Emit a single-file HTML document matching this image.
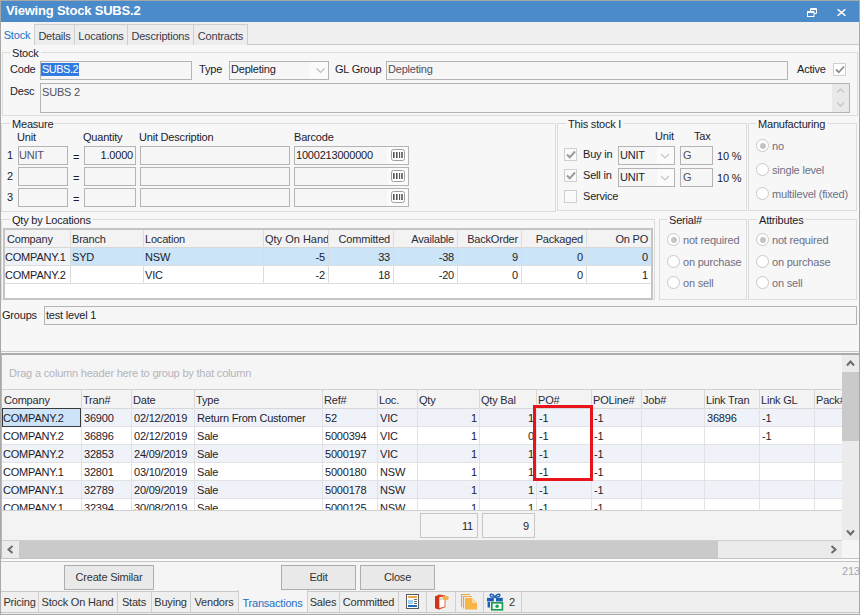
<!DOCTYPE html>
<html><head><meta charset="utf-8"><style>
*{box-sizing:border-box;margin:0;padding:0}
html,body{width:860px;height:615px;overflow:hidden;background:#f0f0f0}
body{position:relative;font-family:"Liberation Sans",sans-serif;font-size:11px;color:#1b1b2b;letter-spacing:-0.2px}
.a{position:absolute}
.t{position:absolute;white-space:nowrap;line-height:13px}
.inp{position:absolute;background:#f6f6f6;border:1px solid #b4b4b4}
.grp{position:absolute;border:1px solid #dcdcdc}
.gl{position:absolute;background:#f7f7f7;padding:0 2px;line-height:13px;white-space:nowrap}
.tab{position:absolute;border:1px solid #cfcfcf;border-bottom:none;background:#ededed;text-align:center;line-height:22px;color:#3a3a4a;white-space:nowrap}
.rad{position:absolute;width:13px;height:13px;border:1px solid #c8c8c8;border-radius:50%;background:#fff}
.chk{position:absolute;width:13px;height:13px;border:1px solid #d0d0d0;background:#fafafa}
.dis{color:#7a7a8c}
.gc{position:absolute;white-space:nowrap;overflow:hidden;line-height:17px;padding:0 2px}
.btn{position:absolute;border:1px solid #adadad;background:#e9e9e9;text-align:center;line-height:22px;color:#333}
</style></head><body>
<div class="a" style="left:0px;top:0px;width:860px;height:615px;background:#f0f0f0;border:1px solid #a8a8a8"></div>
<div class="a" style="left:1px;top:1px;width:858px;height:21px;background:#4b8bca"></div>
<div class="t" style="left:6px;top:3px;font-weight:bold;font-size:13px;color:#fff;line-height:15px;letter-spacing:-0.2px">Viewing Stock SUBS.2</div>
<svg class="a" style="left:807px;top:8px" width="10" height="9" viewBox="0 0 10 9"><path d="M3.5 3V0.5H9.5V5.5H7" fill="none" stroke="#fff"/><path d="M3 1.5H10" stroke="#fff"/><rect x="0.5" y="3.5" width="6.5" height="5" fill="none" stroke="#fff"/><path d="M0 4.5H7" stroke="#fff"/></svg>
<svg class="a" style="left:837px;top:9px" width="9" height="7" viewBox="0 0 9 7"><path d="M0.6 0.2L8.4 6.8M8.4 0.2L0.6 6.8" stroke="#fff" stroke-width="1.5"/></svg>
<div class="a" style="left:1px;top:22px;width:858px;height:22px;background:#f0f0f0"></div>
<div class="a" style="left:1px;top:44px;width:858px;height:1px;background:#c8c8c8"></div>
<div class="a" style="left:1px;top:45px;width:858px;height:306px;background:#f7f7f7"></div>
<div class="tab" style="left:34px;top:24px;width:41px;height:21px">Details</div>
<div class="tab" style="left:74px;top:24px;width:54px;height:21px">Locations</div>
<div class="tab" style="left:127px;top:24px;width:67px;height:21px">Descriptions</div>
<div class="tab" style="left:193px;top:24px;width:55px;height:21px">Contracts</div>
<div class="tab" style="left:1px;top:22px;width:33px;height:23px;padding-right:1px;background:#f7f7f7;color:#1f6fc1;line-height:24px;border-color:#f7f7f7">Stock</div>
<div class="grp" style="left:2px;top:52px;width:856px;height:64px;"></div>
<div class="gl" style="left:10px;top:47px;">Stock</div>
<div class="t" style="left:10px;top:63px;">Code</div>
<div class="inp" style="left:40px;top:61px;width:152px;height:19px;"></div>
<div class="t" style="left:41px;top:63px;background:#2f7be0;color:#fff;line-height:13px;padding:0 1px;letter-spacing:-0.5px">SUBS.2</div>
<div class="t" style="left:199px;top:63px;">Type</div>
<div class="inp" style="left:229px;top:61px;width:100px;height:19px;"></div>
<div class="a" style="left:310px;top:62px;width:18px;height:17px;background:#fbfbfb"></div>
<div class="t" style="left:231px;top:63px;">Depleting</div>
<svg class="a" style="left:316px;top:68px" width="9" height="6"><path d="M0.5 0.5L4.5 4.5L8.5 0.5" fill="none" stroke="#c0c0c0" stroke-width="1.2"/></svg>
<div class="t" style="left:335px;top:63px;">GL Group</div>
<div class="inp" style="left:386px;top:61px;width:402px;height:19px;"></div>
<div class="t" style="left:388px;top:63px;color:#505060">Depleting</div>
<div class="t" style="left:797px;top:63px;">Active</div>
<div class="chk" style="left:833px;top:63px;background:#fff"></div>
<svg class="a" style="left:835px;top:65px" width="10" height="9"><path d="M1 4.5L3.8 7.3L9 1.5" fill="none" stroke="#8c8c8c" stroke-width="1.8"/></svg>
<div class="t" style="left:10px;top:85px;">Desc</div>
<div class="inp" style="left:40px;top:83px;width:810px;height:30px;"></div>
<div class="a" style="left:832px;top:84px;width:17px;height:28px;background:#e9e9e9"></div>
<svg class="a" style="left:836px;top:87px" width="10" height="22"><path d="M1 5.5L4.5 2L8 5.5M1 15.5L4.5 19L8 15.5" fill="none" stroke="#c6c6c6" stroke-width="1.3"/></svg>
<div class="t" style="left:42px;top:86px;color:#505060">SUBS 2</div>
<div class="grp" style="left:1px;top:123px;width:555px;height:89px;"></div>
<div class="gl" style="left:10px;top:118px;">Measure</div>
<div class="t" style="left:17px;top:131px;">Unit</div>
<div class="t" style="left:83px;top:131px;">Quantity</div>
<div class="t" style="left:139px;top:131px;">Unit Description</div>
<div class="t" style="left:294px;top:131px;">Barcode</div>
<div class="t" style="left:7px;top:149px;">1</div>
<div class="inp" style="left:18px;top:146px;width:50px;height:19px;"></div>
<div class="t" style="left:73px;top:151px;">=</div>
<div class="inp" style="left:84px;top:146px;width:52px;height:19px;"></div>
<div class="inp" style="left:140px;top:146px;width:150px;height:19px;"></div>
<div class="inp" style="left:294px;top:146px;width:115px;height:19px;"></div>
<div class="a" style="left:387px;top:147px;width:21px;height:17px;background:#fbfbfb"></div>
<svg class="a" style="left:391px;top:149px" width="14" height="12"><rect x="0.5" y="0.5" width="13" height="11" rx="2" fill="#fff" stroke="#a0a0a0"/><rect x="2" y="3" width="1.6" height="6" fill="#555"/><rect x="5" y="3" width="1.6" height="6" fill="#555"/><rect x="8" y="3" width="1.1" height="6" fill="#555"/><rect x="10.2" y="3" width="1.6" height="6" fill="#555"/></svg>
<div class="t" style="left:7px;top:170px;">2</div>
<div class="inp" style="left:18px;top:167px;width:50px;height:19px;"></div>
<div class="t" style="left:73px;top:172px;">=</div>
<div class="inp" style="left:84px;top:167px;width:52px;height:19px;"></div>
<div class="inp" style="left:140px;top:167px;width:150px;height:19px;"></div>
<div class="inp" style="left:294px;top:167px;width:115px;height:19px;"></div>
<div class="a" style="left:387px;top:168px;width:21px;height:17px;background:#fbfbfb"></div>
<svg class="a" style="left:391px;top:170px" width="14" height="12"><rect x="0.5" y="0.5" width="13" height="11" rx="2" fill="#fff" stroke="#a0a0a0"/><rect x="2" y="3" width="1.6" height="6" fill="#555"/><rect x="5" y="3" width="1.6" height="6" fill="#555"/><rect x="8" y="3" width="1.1" height="6" fill="#555"/><rect x="10.2" y="3" width="1.6" height="6" fill="#555"/></svg>
<div class="t" style="left:7px;top:191px;">3</div>
<div class="inp" style="left:18px;top:188px;width:50px;height:19px;"></div>
<div class="t" style="left:73px;top:193px;">=</div>
<div class="inp" style="left:84px;top:188px;width:52px;height:19px;"></div>
<div class="inp" style="left:140px;top:188px;width:150px;height:19px;"></div>
<div class="inp" style="left:294px;top:188px;width:115px;height:19px;"></div>
<div class="a" style="left:387px;top:189px;width:21px;height:17px;background:#fbfbfb"></div>
<svg class="a" style="left:391px;top:191px" width="14" height="12"><rect x="0.5" y="0.5" width="13" height="11" rx="2" fill="#fff" stroke="#a0a0a0"/><rect x="2" y="3" width="1.6" height="6" fill="#555"/><rect x="5" y="3" width="1.6" height="6" fill="#555"/><rect x="8" y="3" width="1.1" height="6" fill="#555"/><rect x="10.2" y="3" width="1.6" height="6" fill="#555"/></svg>
<div class="t" style="left:19px;top:149px;color:#505070">UNIT</div>
<div class="t" style="left:133px;top:149px;transform:translateX(-100%)">1.0000</div>
<div class="t" style="left:296px;top:149px;">1000213000000</div>
<div class="grp" style="left:557px;top:123px;width:190px;height:88px;"></div>
<div class="gl" style="left:566px;top:118px;">This stock I</div>
<div class="t" style="left:655px;top:130px;">Unit</div>
<div class="t" style="left:694px;top:130px;">Tax</div>
<div class="chk" style="left:564px;top:148px"></div>
<svg class="a" style="left:566px;top:150px" width="10" height="9"><path d="M1 4.5L3.8 7.3L9 1.5" fill="none" stroke="#9a9a9a" stroke-width="2"/></svg>
<div class="t" style="left:583px;top:148px;">Buy in</div>
<div class="chk" style="left:564px;top:169px"></div>
<svg class="a" style="left:566px;top:171px" width="10" height="9"><path d="M1 4.5L3.8 7.3L9 1.5" fill="none" stroke="#9a9a9a" stroke-width="2"/></svg>
<div class="t" style="left:583px;top:169px;">Sell in</div>
<div class="chk" style="left:564px;top:190px"></div>
<div class="t" style="left:583px;top:190px;">Service</div>
<div class="inp" style="left:618px;top:146px;width:57px;height:19px;"></div>
<div class="a" style="left:657px;top:147px;width:17px;height:17px;background:#fbfbfb"></div>
<div class="t" style="left:620px;top:149px;">UNIT</div>
<svg class="a" style="left:660px;top:153px" width="10" height="6"><path d="M1 1L5 5L9 1" fill="none" stroke="#c4c4c4" stroke-width="1.1"/></svg>
<div class="inp" style="left:680px;top:146px;width:33px;height:19px;"></div>
<div class="t" style="left:683px;top:149px;color:#505060">G</div>
<div class="t" style="left:717px;top:150px;">10 %</div>
<div class="inp" style="left:618px;top:168px;width:57px;height:19px;"></div>
<div class="a" style="left:657px;top:169px;width:17px;height:17px;background:#fbfbfb"></div>
<div class="t" style="left:620px;top:171px;">UNIT</div>
<svg class="a" style="left:660px;top:175px" width="10" height="6"><path d="M1 1L5 5L9 1" fill="none" stroke="#c4c4c4" stroke-width="1.1"/></svg>
<div class="inp" style="left:680px;top:168px;width:33px;height:19px;"></div>
<div class="t" style="left:683px;top:171px;color:#505060">G</div>
<div class="t" style="left:717px;top:172px;">10 %</div>
<div class="grp" style="left:748px;top:123px;width:109px;height:88px;"></div>
<div class="gl" style="left:756px;top:118px;">Manufacturing</div>
<div class="rad" style="left:756px;top:139px"></div>
<div class="a" style="left:759.5px;top:142.5px;width:6px;height:6px;background:#c4c4c4;border-radius:50%"></div>
<div class="t" style="left:772px;top:140px;color:#6f6f84">no</div>
<div class="rad" style="left:756px;top:163px"></div>
<div class="t" style="left:772px;top:164px;color:#6f6f84">single level</div>
<div class="rad" style="left:756px;top:187px"></div>
<div class="t" style="left:772px;top:188px;color:#6f6f84">multilevel (fixed)</div>
<div class="grp" style="left:1px;top:219px;width:654px;height:81px;"></div>
<div class="gl" style="left:10px;top:214px;">Qty by Locations</div>
<div class="a" style="left:3px;top:228px;width:650px;height:72px;background:#fff;border:2px solid #c4c4c4"></div>
<div class="a" style="left:5px;top:230px;width:646px;height:17px;background:#f3f3f3"></div>
<div class="a" style="left:5px;top:247px;width:646px;height:1px;background:#d6d6d6"></div>
<div class="a" style="left:5px;top:248px;width:65px;height:17px;background:#eef3f9"></div>
<div class="a" style="left:70px;top:248px;width:581px;height:17px;background:#cce4f7"></div>
<div class="a" style="left:5px;top:265px;width:646px;height:1px;background:#dcdcdc"></div>
<div class="a" style="left:5px;top:283px;width:646px;height:1px;background:#dcdcdc"></div>
<div class="gc" style="left:5px;top:231px;width:65px;color:#2a2a3a">Company</div>
<div class="gc" style="left:3px;top:249px;width:65px;">COMPANY.1</div>
<div class="gc" style="left:3px;top:267px;width:65px;">COMPANY.2</div>
<div class="a" style="left:70px;top:230px;width:1px;height:53px;background:#dcdcdc"></div>
<div class="gc" style="left:70px;top:231px;width:73px;color:#2a2a3a">Branch</div>
<div class="gc" style="left:70px;top:249px;width:73px;">SYD</div>
<div class="gc" style="left:70px;top:267px;width:73px;"></div>
<div class="a" style="left:143px;top:230px;width:1px;height:53px;background:#dcdcdc"></div>
<div class="gc" style="left:143px;top:231px;width:120px;color:#2a2a3a">Location</div>
<div class="gc" style="left:143px;top:249px;width:120px;">NSW</div>
<div class="gc" style="left:143px;top:267px;width:120px;">VIC</div>
<div class="a" style="left:263px;top:230px;width:1px;height:53px;background:#dcdcdc"></div>
<div class="gc" style="left:263px;top:231px;width:65px;text-align:right;padding-right:3px;color:#2a2a3a"><span style="letter-spacing:0">Qty On Hand</span></div>
<div class="gc" style="left:263px;top:249px;width:65px;text-align:right;padding-right:3px;">-5</div>
<div class="gc" style="left:263px;top:267px;width:65px;text-align:right;padding-right:3px;">-2</div>
<div class="a" style="left:328px;top:230px;width:1px;height:53px;background:#dcdcdc"></div>
<div class="gc" style="left:328px;top:231px;width:65px;text-align:right;padding-right:3px;color:#2a2a3a">Committed</div>
<div class="gc" style="left:328px;top:249px;width:65px;text-align:right;padding-right:3px;">33</div>
<div class="gc" style="left:328px;top:267px;width:65px;text-align:right;padding-right:3px;">18</div>
<div class="a" style="left:393px;top:230px;width:1px;height:53px;background:#dcdcdc"></div>
<div class="gc" style="left:393px;top:231px;width:64px;text-align:right;padding-right:3px;color:#2a2a3a">Available</div>
<div class="gc" style="left:393px;top:249px;width:64px;text-align:right;padding-right:3px;">-38</div>
<div class="gc" style="left:393px;top:267px;width:64px;text-align:right;padding-right:3px;">-20</div>
<div class="a" style="left:457px;top:230px;width:1px;height:53px;background:#dcdcdc"></div>
<div class="gc" style="left:457px;top:231px;width:64px;text-align:right;padding-right:3px;color:#2a2a3a">BackOrder</div>
<div class="gc" style="left:457px;top:249px;width:64px;text-align:right;padding-right:3px;">9</div>
<div class="gc" style="left:457px;top:267px;width:64px;text-align:right;padding-right:3px;">0</div>
<div class="a" style="left:521px;top:230px;width:1px;height:53px;background:#dcdcdc"></div>
<div class="gc" style="left:521px;top:231px;width:65px;text-align:right;padding-right:3px;color:#2a2a3a">Packaged</div>
<div class="gc" style="left:521px;top:249px;width:65px;text-align:right;padding-right:3px;">0</div>
<div class="gc" style="left:521px;top:267px;width:65px;text-align:right;padding-right:3px;">0</div>
<div class="a" style="left:586px;top:230px;width:1px;height:53px;background:#dcdcdc"></div>
<div class="gc" style="left:586px;top:231px;width:65px;text-align:right;padding-right:3px;color:#2a2a3a">On PO</div>
<div class="gc" style="left:586px;top:249px;width:65px;text-align:right;padding-right:3px;">0</div>
<div class="gc" style="left:586px;top:267px;width:65px;text-align:right;padding-right:3px;">1</div>
<div class="grp" style="left:659px;top:219px;width:88px;height:81px;"></div>
<div class="gl" style="left:667px;top:214px;">Serial#</div>
<div class="grp" style="left:748px;top:219px;width:109px;height:81px;"></div>
<div class="gl" style="left:757px;top:214px;">Attributes</div>
<div class="rad" style="left:667px;top:233px"></div>
<div class="a" style="left:670.5px;top:236.5px;width:6px;height:6px;background:#c4c4c4;border-radius:50%"></div>
<div class="t" style="left:683px;top:234px;color:#6f6f84">not required</div>
<div class="rad" style="left:667px;top:255px"></div>
<div class="t" style="left:683px;top:256px;color:#6f6f84">on purchase</div>
<div class="rad" style="left:667px;top:276px"></div>
<div class="t" style="left:683px;top:277px;color:#6f6f84">on sell</div>
<div class="rad" style="left:756px;top:233px"></div>
<div class="a" style="left:759.5px;top:236.5px;width:6px;height:6px;background:#c4c4c4;border-radius:50%"></div>
<div class="t" style="left:772px;top:234px;color:#6f6f84">not required</div>
<div class="rad" style="left:756px;top:255px"></div>
<div class="t" style="left:772px;top:256px;color:#6f6f84">on purchase</div>
<div class="rad" style="left:756px;top:276px"></div>
<div class="t" style="left:772px;top:277px;color:#6f6f84">on sell</div>
<div class="t" style="left:2px;top:309px;">Groups</div>
<div class="inp" style="left:44px;top:306px;width:813px;height:19px;"></div>
<div class="t" style="left:46px;top:309px;">test level 1</div>
<div class="a" style="left:1px;top:351px;width:858px;height:1px;background:#cacaca"></div>
<div class="a" style="left:1px;top:352px;width:858px;height:1px;background:#f7f7f7"></div>
<div class="a" style="left:1px;top:353px;width:858px;height:2px;background:#ababab"></div>
<div class="a" style="left:1px;top:355px;width:858px;height:206px;background:#f5f5f5;border-left:1px solid #b8b8b8"></div>
<div class="t" style="left:9px;top:367px;color:#b4b4bc">Drag a column header here to group by that column</div>
<div class="a" style="left:2px;top:389px;width:840px;height:1px;background:#cfcfcf"></div>
<div class="a" style="left:2px;top:390px;width:840px;height:18px;background:#f3f3f3"></div>
<div class="a" style="left:2px;top:408px;width:840px;height:102px;background:#fff"></div>
<div class="a" style="left:2px;top:408px;width:840px;height:1px;background:#d8d8d8"></div>
<div class="a" style="left:2px;top:409px;width:840px;height:17px;background:#eff3f9"></div>
<div class="a" style="left:2px;top:426px;width:840px;height:1px;background:#e2e2e2"></div>
<div class="a" style="left:2px;top:444px;width:840px;height:1px;background:#e2e2e2"></div>
<div class="a" style="left:2px;top:445px;width:840px;height:17px;background:#eff3f9"></div>
<div class="a" style="left:2px;top:462px;width:840px;height:1px;background:#e2e2e2"></div>
<div class="a" style="left:2px;top:480px;width:840px;height:1px;background:#e2e2e2"></div>
<div class="a" style="left:2px;top:481px;width:840px;height:17px;background:#eff3f9"></div>
<div class="a" style="left:2px;top:498px;width:840px;height:1px;background:#e2e2e2"></div>
<div class="a" style="left:2px;top:408px;width:79px;height:19px;background:#cde3f7"></div>
<div class="a" style="left:2px;top:408px;width:840px;height:102px;overflow:hidden">
<div class="a" style="left:79px;top:0px;width:1px;height:102px;background:#e2e2e2"></div>
<div class="a" style="left:129px;top:0px;width:1px;height:102px;background:#e2e2e2"></div>
<div class="a" style="left:192px;top:0px;width:1px;height:102px;background:#e2e2e2"></div>
<div class="a" style="left:320px;top:0px;width:1px;height:102px;background:#e2e2e2"></div>
<div class="a" style="left:375px;top:0px;width:1px;height:102px;background:#e2e2e2"></div>
<div class="a" style="left:415px;top:0px;width:1px;height:102px;background:#e2e2e2"></div>
<div class="a" style="left:477px;top:0px;width:1px;height:102px;background:#e2e2e2"></div>
<div class="a" style="left:534px;top:0px;width:1px;height:102px;background:#e2e2e2"></div>
<div class="a" style="left:589px;top:0px;width:1px;height:102px;background:#e2e2e2"></div>
<div class="a" style="left:639px;top:0px;width:1px;height:102px;background:#e2e2e2"></div>
<div class="a" style="left:702px;top:0px;width:1px;height:102px;background:#e2e2e2"></div>
<div class="a" style="left:757px;top:0px;width:1px;height:102px;background:#e2e2e2"></div>
<div class="a" style="left:812px;top:0px;width:1px;height:102px;background:#e2e2e2"></div>
</div>
<div class="gc" style="left:2px;top:392px;width:79px;color:#2a2a3a">Company</div>
<div class="a" style="left:81px;top:390px;width:1px;height:18px;background:#d8d8d8"></div>
<div class="gc" style="left:81px;top:392px;width:50px;color:#2a2a3a">Tran#</div>
<div class="a" style="left:131px;top:390px;width:1px;height:18px;background:#d8d8d8"></div>
<div class="gc" style="left:131px;top:392px;width:63px;color:#2a2a3a">Date</div>
<div class="a" style="left:194px;top:390px;width:1px;height:18px;background:#d8d8d8"></div>
<div class="gc" style="left:194px;top:392px;width:128px;color:#2a2a3a">Type</div>
<div class="a" style="left:322px;top:390px;width:1px;height:18px;background:#d8d8d8"></div>
<div class="gc" style="left:322px;top:392px;width:55px;color:#2a2a3a">Ref#</div>
<div class="a" style="left:377px;top:390px;width:1px;height:18px;background:#d8d8d8"></div>
<div class="gc" style="left:377px;top:392px;width:40px;color:#2a2a3a">Loc.</div>
<div class="a" style="left:417px;top:390px;width:1px;height:18px;background:#d8d8d8"></div>
<div class="gc" style="left:417px;top:392px;width:62px;color:#2a2a3a">Qty</div>
<div class="a" style="left:479px;top:390px;width:1px;height:18px;background:#d8d8d8"></div>
<div class="gc" style="left:479px;top:392px;width:57px;color:#2a2a3a">Qty Bal</div>
<div class="a" style="left:536px;top:390px;width:1px;height:18px;background:#d8d8d8"></div>
<div class="gc" style="left:536px;top:392px;width:55px;color:#2a2a3a">PO#</div>
<div class="a" style="left:591px;top:390px;width:1px;height:18px;background:#d8d8d8"></div>
<div class="gc" style="left:591px;top:392px;width:50px;color:#2a2a3a">POLine#</div>
<div class="a" style="left:641px;top:390px;width:1px;height:18px;background:#d8d8d8"></div>
<div class="gc" style="left:641px;top:392px;width:63px;color:#2a2a3a">Job#</div>
<div class="a" style="left:704px;top:390px;width:1px;height:18px;background:#d8d8d8"></div>
<div class="gc" style="left:704px;top:392px;width:55px;color:#2a2a3a">Link Tran</div>
<div class="a" style="left:759px;top:390px;width:1px;height:18px;background:#d8d8d8"></div>
<div class="gc" style="left:759px;top:392px;width:55px;color:#2a2a3a">Link GL</div>
<div class="a" style="left:814px;top:390px;width:1px;height:18px;background:#d8d8d8"></div>
<div class="gc" style="left:814px;top:392px;width:29px;color:#2a2a3a">Pack#</div>
<div class="a" style="left:0;top:0;width:860px;height:510px;overflow:hidden">
<div class="gc" style="left:1px;top:410px;width:79px;">COMPANY.2</div>
<div class="gc" style="left:82px;top:410px;width:50px;">36900</div>
<div class="gc" style="left:132px;top:410px;width:63px;">02/12/2019</div>
<div class="gc" style="left:195px;top:410px;width:128px;">Return From Customer</div>
<div class="gc" style="left:323px;top:410px;width:55px;">52</div>
<div class="gc" style="left:378px;top:410px;width:40px;">VIC</div>
<div class="gc" style="left:418px;top:410px;width:62px;text-align:right;padding-right:3px;">1</div>
<div class="gc" style="left:480px;top:410px;width:57px;text-align:right;padding-right:3px;">1</div>
<div class="gc" style="left:537px;top:410px;width:55px;">-1</div>
<div class="gc" style="left:592px;top:410px;width:50px;">-1</div>
<div class="gc" style="left:642px;top:410px;width:63px;"></div>
<div class="gc" style="left:705px;top:410px;width:55px;">36896</div>
<div class="gc" style="left:760px;top:410px;width:55px;">-1</div>
<div class="gc" style="left:815px;top:410px;width:29px;"></div>
<div class="gc" style="left:1px;top:428px;width:79px;">COMPANY.2</div>
<div class="gc" style="left:82px;top:428px;width:50px;">36896</div>
<div class="gc" style="left:132px;top:428px;width:63px;">02/12/2019</div>
<div class="gc" style="left:195px;top:428px;width:128px;">Sale</div>
<div class="gc" style="left:323px;top:428px;width:55px;">5000394</div>
<div class="gc" style="left:378px;top:428px;width:40px;">VIC</div>
<div class="gc" style="left:418px;top:428px;width:62px;text-align:right;padding-right:3px;">1</div>
<div class="gc" style="left:480px;top:428px;width:57px;text-align:right;padding-right:3px;">0</div>
<div class="gc" style="left:537px;top:428px;width:55px;">-1</div>
<div class="gc" style="left:592px;top:428px;width:50px;">-1</div>
<div class="gc" style="left:642px;top:428px;width:63px;"></div>
<div class="gc" style="left:705px;top:428px;width:55px;"></div>
<div class="gc" style="left:760px;top:428px;width:55px;">-1</div>
<div class="gc" style="left:815px;top:428px;width:29px;"></div>
<div class="gc" style="left:1px;top:446px;width:79px;">COMPANY.2</div>
<div class="gc" style="left:82px;top:446px;width:50px;">32853</div>
<div class="gc" style="left:132px;top:446px;width:63px;">24/09/2019</div>
<div class="gc" style="left:195px;top:446px;width:128px;">Sale</div>
<div class="gc" style="left:323px;top:446px;width:55px;">5000197</div>
<div class="gc" style="left:378px;top:446px;width:40px;">VIC</div>
<div class="gc" style="left:418px;top:446px;width:62px;text-align:right;padding-right:3px;">1</div>
<div class="gc" style="left:480px;top:446px;width:57px;text-align:right;padding-right:3px;">1</div>
<div class="gc" style="left:537px;top:446px;width:55px;">-1</div>
<div class="gc" style="left:592px;top:446px;width:50px;">-1</div>
<div class="gc" style="left:642px;top:446px;width:63px;"></div>
<div class="gc" style="left:705px;top:446px;width:55px;"></div>
<div class="gc" style="left:760px;top:446px;width:55px;"></div>
<div class="gc" style="left:815px;top:446px;width:29px;"></div>
<div class="gc" style="left:1px;top:464px;width:79px;">COMPANY.1</div>
<div class="gc" style="left:82px;top:464px;width:50px;">32801</div>
<div class="gc" style="left:132px;top:464px;width:63px;">03/10/2019</div>
<div class="gc" style="left:195px;top:464px;width:128px;">Sale</div>
<div class="gc" style="left:323px;top:464px;width:55px;">5000180</div>
<div class="gc" style="left:378px;top:464px;width:40px;">NSW</div>
<div class="gc" style="left:418px;top:464px;width:62px;text-align:right;padding-right:3px;">1</div>
<div class="gc" style="left:480px;top:464px;width:57px;text-align:right;padding-right:3px;">1</div>
<div class="gc" style="left:537px;top:464px;width:55px;">-1</div>
<div class="gc" style="left:592px;top:464px;width:50px;">-1</div>
<div class="gc" style="left:642px;top:464px;width:63px;"></div>
<div class="gc" style="left:705px;top:464px;width:55px;"></div>
<div class="gc" style="left:760px;top:464px;width:55px;"></div>
<div class="gc" style="left:815px;top:464px;width:29px;"></div>
<div class="gc" style="left:1px;top:482px;width:79px;">COMPANY.1</div>
<div class="gc" style="left:82px;top:482px;width:50px;">32789</div>
<div class="gc" style="left:132px;top:482px;width:63px;">20/09/2019</div>
<div class="gc" style="left:195px;top:482px;width:128px;">Sale</div>
<div class="gc" style="left:323px;top:482px;width:55px;">5000178</div>
<div class="gc" style="left:378px;top:482px;width:40px;">NSW</div>
<div class="gc" style="left:418px;top:482px;width:62px;text-align:right;padding-right:3px;">1</div>
<div class="gc" style="left:480px;top:482px;width:57px;text-align:right;padding-right:3px;">1</div>
<div class="gc" style="left:537px;top:482px;width:55px;">-1</div>
<div class="gc" style="left:592px;top:482px;width:50px;">-1</div>
<div class="gc" style="left:642px;top:482px;width:63px;"></div>
<div class="gc" style="left:705px;top:482px;width:55px;"></div>
<div class="gc" style="left:760px;top:482px;width:55px;"></div>
<div class="gc" style="left:815px;top:482px;width:29px;"></div>
<div class="gc" style="left:1px;top:500px;width:79px;">COMPANY.1</div>
<div class="gc" style="left:82px;top:500px;width:50px;">32394</div>
<div class="gc" style="left:132px;top:500px;width:63px;">30/08/2019</div>
<div class="gc" style="left:195px;top:500px;width:128px;">Sale</div>
<div class="gc" style="left:323px;top:500px;width:55px;">5000125</div>
<div class="gc" style="left:378px;top:500px;width:40px;">NSW</div>
<div class="gc" style="left:418px;top:500px;width:62px;text-align:right;padding-right:3px;">1</div>
<div class="gc" style="left:480px;top:500px;width:57px;text-align:right;padding-right:3px;">1</div>
<div class="gc" style="left:537px;top:500px;width:55px;">-1</div>
<div class="gc" style="left:592px;top:500px;width:50px;">-1</div>
<div class="gc" style="left:642px;top:500px;width:63px;"></div>
<div class="gc" style="left:705px;top:500px;width:55px;"></div>
<div class="gc" style="left:760px;top:500px;width:55px;"></div>
<div class="gc" style="left:815px;top:500px;width:29px;"></div>
</div>
<div class="a" style="left:2px;top:408px;width:79px;height:19px;border:1px solid #3a3a3a;background:transparent"></div>
<div class="a" style="left:2px;top:510px;width:840px;height:30px;background:#f3f3f3;border-top:1px solid #d0d0d0"></div>
<div class="a" style="left:420px;top:513px;width:58px;height:25px;border:1px solid #c6c6c6;background:#f5f5f5"></div>
<div class="a" style="left:482px;top:513px;width:53px;height:25px;border:1px solid #c6c6c6;background:#f5f5f5"></div>
<div class="t" style="left:420px;top:520px;width:53px;text-align:right">11</div>
<div class="t" style="left:482px;top:520px;width:47px;text-align:right">9</div>
<div class="a" style="left:842px;top:355px;width:17px;height:185px;background:#ebebeb"></div>
<div class="a" style="left:842px;top:372px;width:17px;height:69px;background:#cacaca"></div>
<svg class="a" style="left:846px;top:359px" width="9" height="8"><path d="M1 6.5L4.5 2.5L8 6.5" fill="none" stroke="#6a6a6a" stroke-width="2"/></svg>
<svg class="a" style="left:846px;top:529px" width="9" height="8"><path d="M1 1.5L4.5 5.5L8 1.5" fill="none" stroke="#6a6a6a" stroke-width="2"/></svg>
<div class="a" style="left:2px;top:540px;width:840px;height:1px;background:#cfcfcf"></div>
<div class="a" style="left:2px;top:541px;width:840px;height:17px;background:#ebebeb"></div>
<div class="a" style="left:19px;top:541px;width:699px;height:17px;background:#cacaca"></div>
<div class="a" style="left:842px;top:540px;width:17px;height:18px;background:#f5f5f5"></div>
<svg class="a" style="left:6px;top:545px" width="8" height="9"><path d="M6.5 1L2.5 4.5L6.5 8" fill="none" stroke="#6a6a6a" stroke-width="2"/></svg>
<svg class="a" style="left:830px;top:545px" width="8" height="9"><path d="M1.5 1L5.5 4.5L1.5 8" fill="none" stroke="#6a6a6a" stroke-width="2"/></svg>
<div class="a" style="left:533px;top:405px;width:60px;height:76px;border:3px solid #e8141c;background:transparent"></div>
<div class="a" style="left:1px;top:558px;width:858px;height:1px;background:#c4c4c4"></div>
<div class="a" style="left:1px;top:559px;width:858px;height:2px;background:#fbfbfb"></div>
<div class="a" style="left:1px;top:561px;width:858px;height:1px;background:#c4c4c4"></div>
<div class="a" style="left:1px;top:562px;width:858px;height:29px;background:#f5f5f5"></div>
<div class="btn" style="left:64px;top:565px;width:90px;height:25px">Create Similar</div>
<div class="btn" style="left:281px;top:565px;width:75px;height:25px">Edit</div>
<div class="btn" style="left:360px;top:565px;width:75px;height:25px">Close</div>
<div class="t" style="left:842px;top:565px;color:#a0a8b8">213</div>
<div class="a" style="left:1px;top:591px;width:858px;height:1px;background:#c8c8c8"></div>
<div class="a" style="left:1px;top:592px;width:858px;height:22px;background:#efefef"></div>
<div class="a" style="left:1px;top:592px;width:38px;height:22px;border-right:1px solid #cfcfcf"></div>
<div class="t" style="left:1px;top:596px;width:37px;text-align:center;color:#333">Pricing</div>
<div class="a" style="left:38px;top:592px;width:80px;height:22px;border-right:1px solid #cfcfcf"></div>
<div class="t" style="left:38px;top:596px;width:79px;text-align:center;color:#333">Stock On Hand</div>
<div class="a" style="left:117px;top:592px;width:35px;height:22px;border-right:1px solid #cfcfcf"></div>
<div class="t" style="left:117px;top:596px;width:34px;text-align:center;color:#333">Stats</div>
<div class="a" style="left:151px;top:592px;width:40px;height:22px;border-right:1px solid #cfcfcf"></div>
<div class="t" style="left:151px;top:596px;width:39px;text-align:center;color:#333">Buying</div>
<div class="a" style="left:190px;top:592px;width:49px;height:22px;border-right:1px solid #cfcfcf"></div>
<div class="t" style="left:190px;top:596px;width:48px;text-align:center;color:#333">Vendors</div>
<div class="a" style="left:238px;top:590px;width:70px;height:24px;background:#f5f5f5;border:1px solid #cfcfcf;border-bottom:none;border-top:none"></div>
<div class="t" style="left:238px;top:597px;width:69px;text-align:center;color:#1f6fc1">Transactions</div>
<div class="a" style="left:307px;top:592px;width:33px;height:22px;border-right:1px solid #cfcfcf"></div>
<div class="t" style="left:307px;top:596px;width:32px;text-align:center;color:#333">Sales</div>
<div class="a" style="left:339px;top:592px;width:60px;height:22px;border-right:1px solid #cfcfcf"></div>
<div class="t" style="left:339px;top:596px;width:59px;text-align:center;color:#333">Committed</div>
<div class="a" style="left:398px;top:592px;width:29px;height:22px;border-right:1px solid #cfcfcf"></div>
<div class="a" style="left:426px;top:592px;width:30px;height:22px;border-right:1px solid #cfcfcf"></div>
<div class="a" style="left:455px;top:592px;width:29px;height:22px;border-right:1px solid #cfcfcf"></div>
<div class="a" style="left:483px;top:592px;width:39px;height:22px;border-right:1px solid #cfcfcf"></div>
<svg class="a" style="left:406px;top:594px" width="13" height="15" viewBox="0 0 13 15" shape-rendering="crispEdges"><rect x="0.5" y="0.5" width="12" height="14" fill="#fff" stroke="#5a5a5a" stroke-width="1.2"/><rect x="2" y="2" width="9" height="2" fill="#f0a848"/><rect x="2" y="6" width="5" height="4" fill="#9fd2f2"/><rect x="8" y="5" width="3" height="1" fill="#666"/><rect x="8" y="7" width="3" height="1" fill="#666"/><rect x="8" y="9" width="3" height="1" fill="#666"/><rect x="2" y="11" width="9" height="2" fill="#2468b8"/></svg>
<svg class="a" style="left:435px;top:594px" width="14" height="16" viewBox="0 0 14 16"><path d="M0 2.5L4 0.5L10 1.5L10 13L4 15.5L0 14Z" fill="#d8381c"/><path d="M4 3L10 2V13L4 14.5Z" fill="#fff" stroke="#e04828" stroke-width="0.8"/><path d="M0 2.5L4 3V15.5L0 14Z" fill="#d03418"/><ellipse cx="10.5" cy="4" rx="3.2" ry="2.2" fill="#f0b050"/><circle cx="6" cy="5" r="0.6" fill="#444"/></svg>
<svg class="a" style="left:461px;top:594px" width="17" height="16" viewBox="0 0 17 16"><path d="M0.5 13V0.5H9" fill="none" stroke="#eba740" stroke-width="1.2"/><path d="M2.5 14.5V2.5H11" fill="none" stroke="#eba740" stroke-width="1.2"/><path d="M4 4H11L16 9V15.5H4Z" fill="#f9b448"/><path d="M11 4V9H16Z" fill="#fcd89a"/></svg>
<svg class="a" style="left:487px;top:593px" width="17" height="18" viewBox="0 0 17 18"><path d="M8 4.2C6 0.5 3 0.5 3.2 2.5C3.4 4 6 4.2 8 4.2C10 4.2 12.6 4 12.8 2.5C13 0.5 10 0.5 8 4.2Z" fill="none" stroke="#1c5eb4" stroke-width="1.5"/><rect x="0" y="4.8" width="6.8" height="3.6" fill="#1c5eb4"/><rect x="9" y="4.8" width="6.8" height="3.6" fill="#1c5eb4"/><rect x="0.6" y="9" width="2.4" height="5.5" fill="#1c5eb4"/><rect x="4.8" y="9.8" width="10.6" height="7" fill="#fff" stroke="#16a050" stroke-width="1.7"/><circle cx="10.1" cy="13.3" r="1.8" fill="#16a050"/></svg>
<div class="t" style="left:509px;top:596px;color:#333">2</div>
<div class="a" style="left:1px;top:612px;width:858px;height:1px;background:#c8c8c8"></div>
<div class="a" style="left:1px;top:613px;width:858px;height:1px;background:#f0f0f0"></div>
</body></html>
